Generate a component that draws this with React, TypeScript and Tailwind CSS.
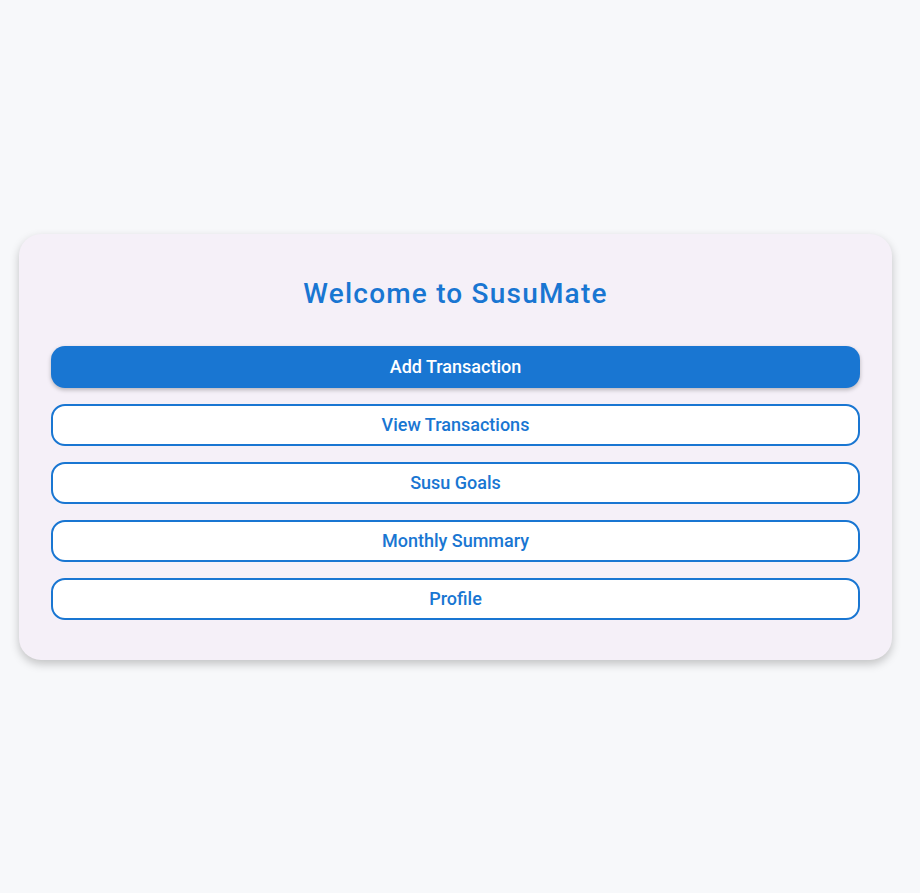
const ITEMS = ["View Transactions", "Susu Goals", "Monthly Summary", "Profile"];

export default function App() {
  return (
    <div
      className="flex min-h-screen items-center bg-[#f7f8fa] pl-[19px] pr-[28px]"
      style={{ fontFamily: "Roboto, 'Liberation Sans', sans-serif" }}
    >
      <div className="w-full rounded-[22px] bg-[#f5f0f8] px-8 pb-10 pt-[42px] shadow-[0_4px_10px_rgba(0,0,0,0.22)]">
        <h1 className="mb-[34px] text-center text-[28px] font-medium leading-[36px] tracking-[1.2px] text-[#1976d2]">
          Welcome to SusuMate
        </h1>
        <div className="flex flex-col gap-4">
          <button className="h-[42px] rounded-[14px] bg-[#1976d2] text-[18px] font-medium text-white shadow-[0_2px_4px_rgba(0,0,0,0.25)]">
            Add Transaction
          </button>
          {ITEMS.map((label) => (
            <button
              key={label}
              className="h-[42px] rounded-[14px] border-2 border-[#1976d2] bg-white text-[18px] font-medium text-[#1976d2]"
            >
              {label}
            </button>
          ))}
        </div>
      </div>
    </div>
  );
}
